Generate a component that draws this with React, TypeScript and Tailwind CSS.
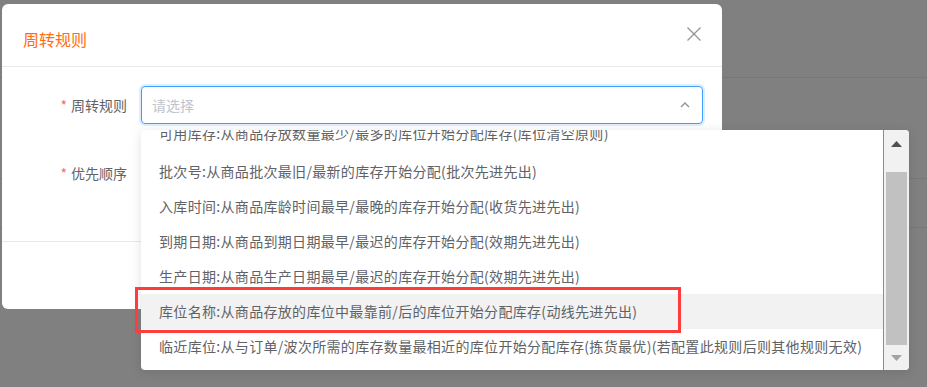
import React from 'react';

const options = [
  '可用库存:从商品存放数量最少/最多的库位开始分配库存(库位清空原则)',
  '批次号:从商品批次最旧/最新的库存开始分配(批次先进先出)',
  '入库时间:从商品库龄时间最早/最晚的库存开始分配(收货先进先出)',
  '到期日期:从商品到期日期最早/最迟的库存开始分配(效期先进先出)',
  '生产日期:从商品生产日期最早/最迟的库存开始分配(效期先进先出)',
  '库位名称:从商品存放的库位中最靠前/后的库位开始分配库存(动线先进先出)',
  '临近库位:从与订单/波次所需的库存数量最相近的库位开始分配库存(拣货最优)(若配置此规则后则其他规则无效)',
];

function Label({ text }: { text: string }) {
  return (
    <div className="w-[139px] pr-[14px] text-right text-[14px] leading-[20px] text-[#606266]">
      <span className="mr-[4px] text-[#f56c6c]">*</span>
      {text}
    </div>
  );
}

export default function App() {
  return (
    <div className="relative w-[927px] h-[387px] overflow-hidden bg-[#808080] font-['Noto_Sans_CJK_SC','Noto_Sans',sans-serif]">
      {/* page content behind the overlay */}
      <div className="absolute inset-0 flex flex-col">
        <div className="h-[78px] border-b border-[#777777]" />
        <div className="h-[101px] border-b border-[#777777]" />
        <div className="h-[49px] border-b border-[#777777]" />
      </div>

      {/* modal */}
      <div className="absolute left-[2px] top-[4px] w-[720px] h-[305px] bg-white rounded-[6px] flex flex-col">
        <div className="h-[63px] border-b border-[#e8e8e8] flex justify-between items-start pl-[21px] pr-[21px]">
          <span className="mt-[25px] text-[16px] leading-[20px] text-[#ff6d12]">周转规则</span>
          <svg className="mt-[23px]" width="14" height="14" viewBox="0 0 14 14">
            <path d="M0.5 0.5 L13.5 13.5 M13.5 0.5 L0.5 13.5" stroke="#909399" strokeWidth="1.2" fill="none" />
          </svg>
        </div>
        <div className="pt-[19px] flex flex-col">
          <div className="flex items-center h-[38px]">
            <Label text="周转规则" />
            <div className="flex-1 mr-[19px] h-[38px] border border-[#409eff] rounded-[4px] shadow-[0_0_0_2px_rgba(64,158,255,0.18)] flex items-center justify-between pl-[10px] pr-[12px]">
              <span className="text-[14px] text-[#c0c4cc]">请选择</span>
              <svg width="10" height="6" viewBox="0 0 10 6">
                <path d="M1 5 L5 1 L9 5" stroke="#909399" strokeWidth="1.4" fill="none" />
              </svg>
            </div>
          </div>
          <div className="flex items-center h-[38px] mt-[30px]">
            <Label text="优先顺序" />
            <div className="flex-1 mr-[19px] h-[38px] border border-[#dcdfe6] rounded-[4px] flex items-center pl-[10px]">
              <span className="text-[14px] text-[#c0c4cc]">请选择</span>
            </div>
          </div>
        </div>
        <div className="mt-[49px] border-t border-[#e8e8e8] flex-1" />
      </div>

      {/* dropdown */}
      <div className="absolute left-[141px] top-[130px] w-[768px] h-[240px] bg-white rounded-[4px] shadow-[0_2px_12px_0_rgba(0,0,0,0.12)] flex overflow-hidden">
        <div className="w-[742px] overflow-hidden">
          <div className="-mt-[14px] flex flex-col">
            {options.map((o, i) => (
              <div
                key={i}
                className={
                  i === 0
                    ? 'h-[38px] leading-[35px] pl-[18px] text-[14px] tracking-[0.32px] text-[#606266] whitespace-nowrap'
                    : i === 5
                    ? 'h-[35px] leading-[35px] pl-[18px] text-[14px] tracking-[0.32px] text-[#606266] whitespace-nowrap bg-[#f2f2f2]'
                    : 'h-[35px] leading-[35px] pl-[18px] text-[14px] tracking-[0.32px] text-[#606266] whitespace-nowrap'
                }
              >
                {o}
              </div>
            ))}
          </div>
        </div>
        <div className="w-[1px] bg-[#8c8c8c]" />
        <div className="w-[25px] bg-[#f1f1f1] flex flex-col items-center">
          <svg className="mt-[11px]" width="11" height="6" viewBox="0 0 11 6">
            <polygon points="5.5,0 11,6 0,6" fill="#505050" />
          </svg>
          <div className="mt-[25px] w-[21px] h-[173px] bg-[#c1c1c1]" />
          <svg className="mt-[10px]" width="11" height="6" viewBox="0 0 11 6">
            <polygon points="0,0 11,0 5.5,6" fill="#a3a3a3" />
          </svg>
        </div>
      </div>

      {/* annotation */}
      <div className="absolute left-[135px] top-[287px] w-[546px] h-[46px] border-[3px] border-[#ff3b3b]" />
    </div>
  );
}
